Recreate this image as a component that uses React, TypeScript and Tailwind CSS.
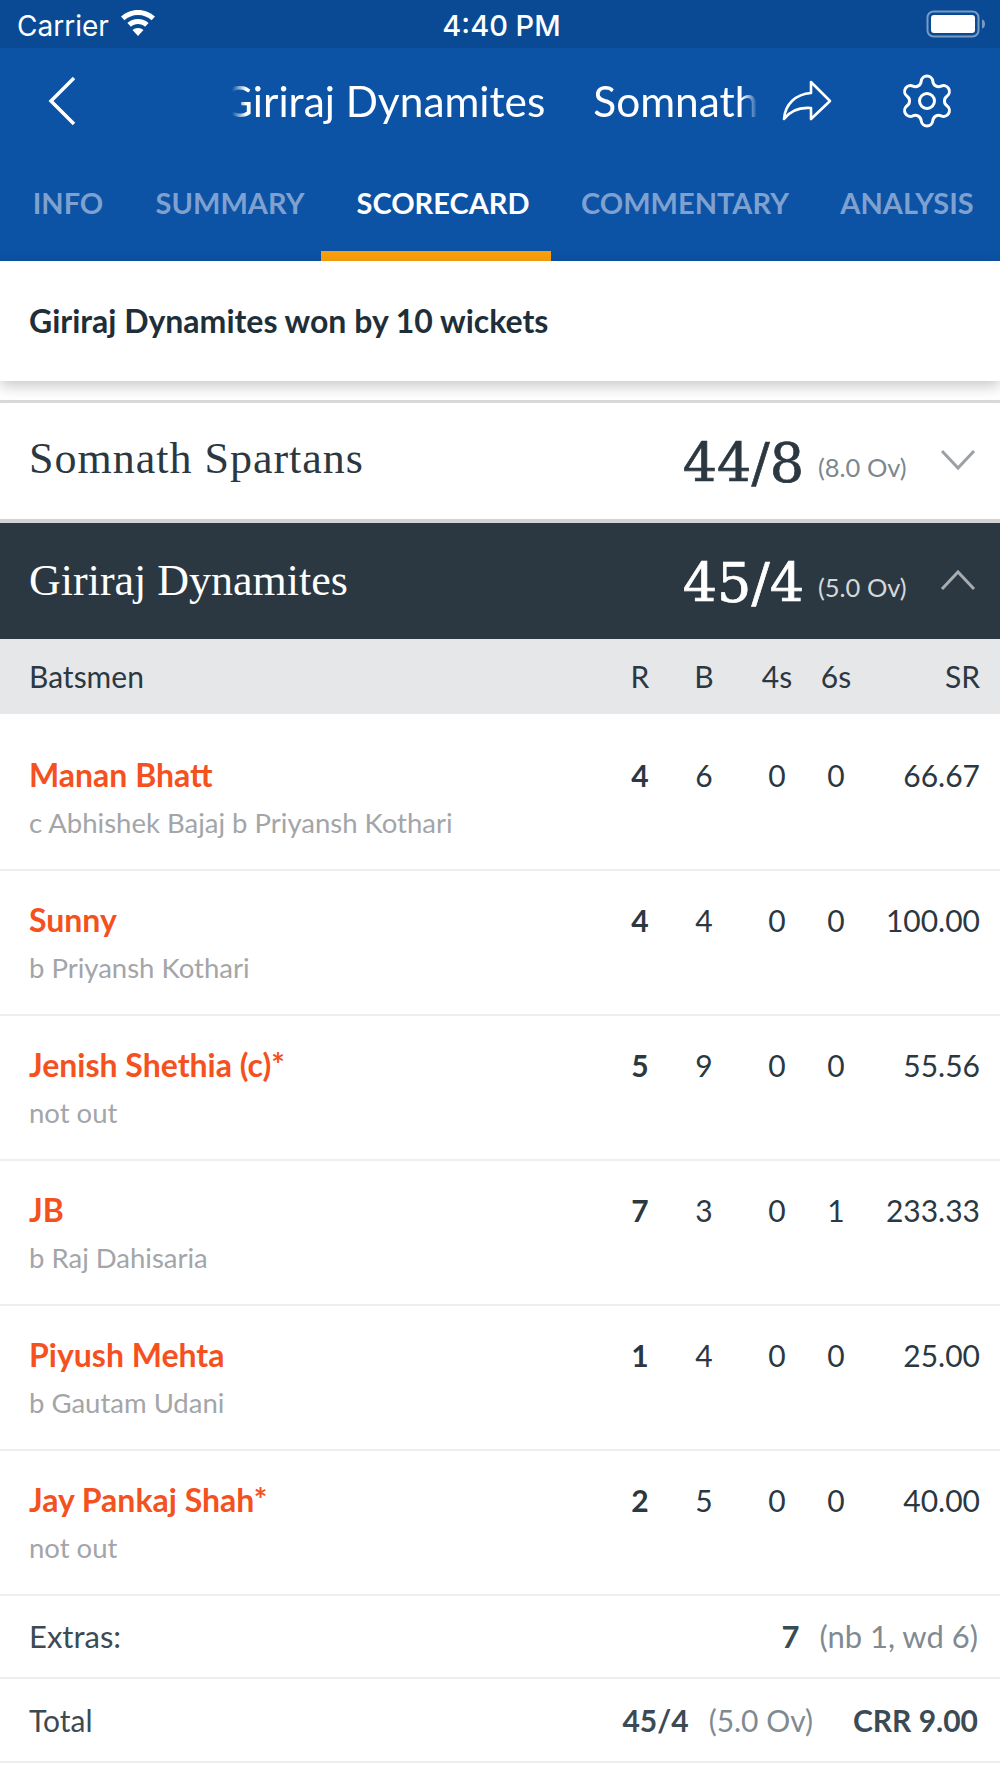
import React from 'react'
import { Settings } from 'lucide-react'

const sans = "font-['Lato','Noto_Sans',sans-serif]"

const tabs = [
    { label: 'INFO', box: 'w-[136px]' },
    { label: 'SUMMARY', box: 'w-[185px] pl-[3px]' },
    { label: 'SCORECARD', box: 'w-[230px] pl-[14px]', active: true },
    { label: 'COMMENTARY', box: 'w-[268px]' },
    { label: 'ANALYSIS', box: 'w-[176px]' },
]

const batsmen = [
    { name: 'Manan Bhatt', out: 'c Abhishek Bajaj b Priyansh Kothari', r: 4, b: 6, fours: 0, sixes: 0, sr: '66.67' },
    { name: 'Sunny', out: 'b Priyansh Kothari', r: 4, b: 4, fours: 0, sixes: 0, sr: '100.00' },
    { name: 'Jenish Shethia (c)*', out: 'not out', r: 5, b: 9, fours: 0, sixes: 0, sr: '55.56' },
    { name: 'JB', out: 'b Raj Dahisaria', r: 7, b: 3, fours: 0, sixes: 1, sr: '233.33' },
    { name: 'Piyush Mehta', out: 'b Gautam Udani', r: 1, b: 4, fours: 0, sixes: 0, sr: '25.00' },
    { name: 'Jay Pankaj Shah*', out: 'not out', r: 2, b: 5, fours: 0, sixes: 0, sr: '40.00' },
]

function WifiIcon() {
    return (
        <svg width="36" height="28" viewBox="0 0 36 28" fill="white">
            <path d="M18 0C11.5 0 5.6 2.5 1 6.6l3.4 3.6C8 7 12.8 5 18 5s10 2 13.6 5.2L35 6.6C30.4 2.5 24.500 0 18 0z" />
            <path d="M18 9c-4 0-7.700 1.500-10.600 4l3.500 3.700C12.900 15 15.300 14.100 18 14.100s5.100.9 7.100 2.600l3.500-3.700C25.700 10.500 22 9 18 9z" />
            <path d="M18 18c-2.100 0-4 .7-5.500 2L18 26l5.500-6c-1.500-1.300-3.400-2-5.500-2z" />
        </svg>
    )
}

function BatteryIcon() {
    return (
        <svg width="60" height="28" viewBox="0 0 60 28" fill="none">
            <rect x="1.500" y="1.500" width="51" height="25" rx="6" stroke="white" strokeOpacity="0.45" strokeWidth="2" />
            <rect x="5" y="5" width="44" height="18" rx="3" fill="white" />
            <path d="M56 9.500c2 .5 3 2.200 3 4.500s-1 4-3 4.500z" fill="white" fillOpacity="0.45" />
        </svg>
    )
}

function ShareIcon() {
    return (
        <svg width="50" height="42" viewBox="0 0 50 42" fill="none" stroke="white" strokeWidth="2.600" strokeLinejoin="round">
            <path d="M29 2l19 19-19 18V28C17 27 8 31 2 39c1-15 12-25 27-26z" />
        </svg>
    )
}

function Chevron({ up, color }: { up?: boolean; color: string }) {
    return (
        <svg width="36" height="22" viewBox="0 0 36 22" fill="none" stroke={color} strokeWidth="3">
            <path d={up ? 'M2 20L18 3l16 17' : 'M2 2l16 17L34 2'} />
        </svg>
    )
}

function InningsRow({ name, score, overs, open }: { name: string; score: string; overs: string; open?: boolean }) {
    return (
        <div className={`h-[116px] flex items-center pl-[29px] pr-[24px] ${open ? 'bg-[#2c3841] text-white' : 'bg-white text-[#2c3841]'}`}>
            <span className={`flex-1 font-['Liberation_Serif',serif] text-[44px] leading-none ${open ? 'mt-0' : 'mt-[-4px] tracking-[1px]'}`}>{name}</span>
            <span className="font-['DejaVu_Serif',serif] text-[54px] leading-none mt-[6px] [-webkit-text-stroke:0.7px_currentColor]">{score}</span>
            <span className={`${sans} w-[107px] pl-[14px] text-[25.5px] mt-[12px] ${open ? 'text-[#d5d8da]' : 'text-[#7d878e]'}`}>{overs}</span>
            <span className="ml-[29px] mt-[-2px]">
                <Chevron up={open} color={open ? '#a6acb0' : '#9aa1a6'} />
            </span>
        </div>
    )
}

export default function App() {
    return (
        <div className={`w-[1000px] h-[1778px] bg-white overflow-hidden ${sans}`}>
            {/* Status bar */}
            <div className="h-[48px] bg-[#0a4a94] flex items-center px-[17px] text-white">
                <div className="flex-1 flex items-center gap-[11px]">
                    <span className="font-['Inter',sans-serif] text-[28px] leading-none mt-[3px]">Carrier</span>
                    <WifiIcon />
                </div>
                <span className="font-['Inter',sans-serif] font-medium text-[29px] leading-none mt-[3px]">4:40 PM</span>
                <div className="flex-1 flex justify-end -mr-[3px]">
                    <BatteryIcon />
                </div>
            </div>

            {/* Header */}
            <div className="h-[213px] bg-[#0c52a5] flex flex-col">
                <div className="h-[106px] flex items-center">
                    <svg className="ml-[48px]" width="28" height="50" viewBox="0 0 28 50" fill="none" stroke="white" strokeWidth="3.500">
                        <path d="M26 2L3 25l23 23" />
                    </svg>
                    <div className="ml-[156px] w-[526px] overflow-hidden whitespace-nowrap flex text-white text-[42.4px] leading-[50px] [mask-image:linear-gradient(to_right,transparent,black_14px,black_510px,transparent)]">
                        <span className="ml-[-10px]">Giriraj Dynamites</span>
                        <span className="ml-[48px]">Somnath Spartans</span>
                    </div>
                    <span className="ml-[24px]">
                        <ShareIcon />
                    </span>
                    <span className="ml-[65px] text-white">
                        <Settings size={60} strokeWidth={1.200} />
                    </span>
                </div>
                <div className="flex-1 flex items-stretch">
                    {tabs.map((tab) => (
                        <div
                            key={tab.label}
                            className={`${tab.box} flex items-center justify-center text-[29px] font-bold leading-none ${tab.active ? 'text-white border-b-[10px] border-[#fba00d]' : 'text-[#7ea1d0] border-b-[10px] border-transparent'}`}
                        >
                            {tab.label}
                        </div>
                    ))}
                </div>
            </div>

            {/* Result */}
            <div className="h-[120px] bg-white flex items-center pl-[29px] font-bold text-[32px] text-[#1f2f3a] shadow-[0_5px_14px_rgba(0,0,0,0.22)] relative">
                Giriraj Dynamites won by 10 wickets
            </div>
            <div className="h-[22px] bg-white border-b-[3px] border-[#d9d9d9]" />

            <InningsRow name="Somnath Spartans" score="44/8" overs="(8.0 Ov)" />
            <div className="h-[4px] bg-[#d3d3d3]" />
            <InningsRow name="Giriraj Dynamites" score="45/4" overs="(5.0 Ov)" open />

            {/* Table */}
            <div className="h-[75px] bg-[#e6e7e9] flex items-center pl-[29px] pr-[20px] text-[30px] text-[#2c3841]">
                <span className="flex-1">Batsmen</span>
                <span className="w-[40px] text-center">R</span>
                <span className="w-[40px] ml-[24px] text-center">B</span>
                <span className="w-[50px] ml-[28px] text-center">4s</span>
                <span className="w-[50px] ml-[9px] text-center">6s</span>
                <span className="w-[119px] text-right">SR</span>
            </div>

            {batsmen.map((b, i) => (
                <div key={b.name} className={`border-b-2 border-[#eeeeee] pl-[29px] pr-[20px] ${i === 0 ? 'h-[157px] pt-[41px]' : 'h-[145px] pt-[29px]'}`}>
                    <div className="flex items-center h-[40px] text-[30px] leading-none text-[#2c3841]">
                        <span className="flex-1 font-bold text-[32px] text-[#f4511e]">{b.name}</span>
                        <span className="w-[40px] text-center font-bold">{b.r}</span>
                        <span className="w-[40px] ml-[24px] text-center">{b.b}</span>
                        <span className="w-[50px] ml-[28px] text-center">{b.fours}</span>
                        <span className="w-[50px] ml-[9px] text-center">{b.sixes}</span>
                        <span className="w-[119px] text-right">{b.sr}</span>
                    </div>
                    <div className="mt-[14px] text-[27.5px] leading-none text-[#a3a5a8]">{b.out}</div>
                </div>
            ))}

            <div className="h-[83px] border-b-2 border-[#eeeeee] pl-[29px] pr-[22px] flex items-center text-[31px] text-[#3c4a54]">
                <span className="flex-1">Extras:</span>
                <span className="font-bold">7</span>
                <span className="ml-[20px] text-[#7f8a91]">(nb 1, wd 6)</span>
            </div>
            <div className="h-[84px] border-b-2 border-[#eeeeee] pl-[29px] pr-[22px] flex items-center text-[30px] text-[#3c4a54]">
                <span className="flex-1">Total</span>
                <span className="font-bold">45/4</span>
                <span className="ml-[20px] text-[#7f8a91]">(5.0 Ov)</span>
                <span className="ml-[40px] font-bold">CRR 9.00</span>
            </div>
        </div>
    )
}
